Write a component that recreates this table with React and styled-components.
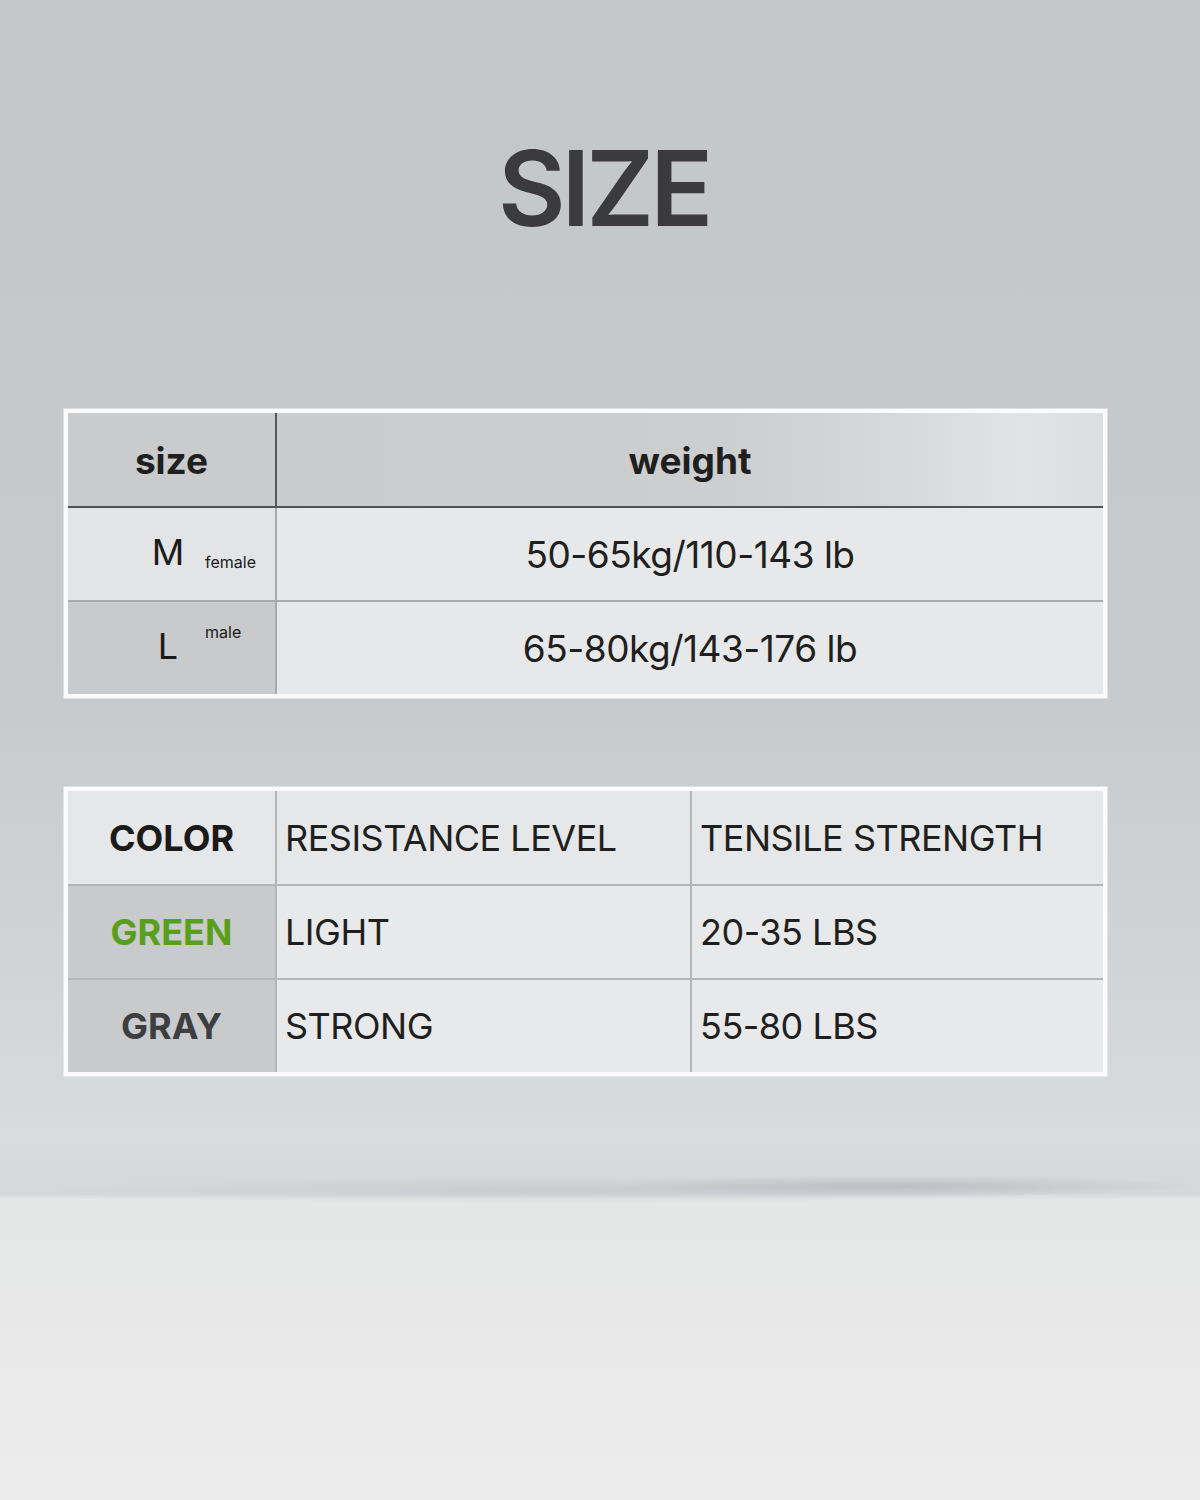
import styled, { createGlobalStyle } from "styled-components";

const GlobalStyle = createGlobalStyle`
    html, body {
        margin: 0;
        padding: 0;
    }
    body {
        font-family: Inter, "Noto Sans", sans-serif;
        color: #1f1f20;
    }
`;

const sizeRows = [
    { size: "M", note: "female", place: "sub", tone: "light", weight: "50-65kg/110-143 lb" },
    { size: "L", note: "male", place: "sup", tone: "dark", weight: "65-80kg/143-176 lb" },
];

const colorRows = [
    { color: "GREEN", ink: "#5a9f1c", level: "LIGHT", strength: "20-35 LBS" },
    { color: "GRAY", ink: "#3d3e40", level: "STRONG", strength: "55-80 LBS" },
];

const App = () => {
    return (
        <Page>
            <GlobalStyle />
            {/* Title */}
            <Title>SIZE</Title>

            {/* Size / weight table */}
            <Table $columns="207px 1fr" $gap="#a7a9ab">
                <Cell $bg="#c9cbcd" $line="#4f5153" $vline="#55575a" $bold $size={37}>size</Cell>
                <Cell $bg="linear-gradient(90deg, #c9cbcd 0%, #cccecf 55%, #d6d8d9 75%, #e2e3e4 90%, #dcdedf 100%)" $line="#4f5153" $bold $size={37}>
                    weight
                </Cell>
                {sizeRows.map((row) => (
                    <Row key={row.size}>
                        <SizeCell $bg={row.tone === "dark" ? "#c8cacc" : "#e3e4e5"}>
                            <SizeLetter>{row.size}</SizeLetter>
                            <SizeNote $place={row.place}>{row.note}</SizeNote>
                        </SizeCell>
                        <Cell $bg="#e7e8e9" $size={37}>{row.weight}</Cell>
                    </Row>
                ))}
            </Table>

            {/* Color / resistance table */}
            <Table $columns="207px 413px 1fr" $gap="#b3b5b7">
                <Cell $bg="#e6e7e8" $bold $ink="#1a1a1a" $size={36}>COLOR</Cell>
                <Cell $bg="#e6e7e8" $align="left" $size={36}>RESISTANCE LEVEL</Cell>
                <Cell $bg="#e6e7e8" $align="left" $size={36}>TENSILE STRENGTH</Cell>
                {colorRows.map((row) => (
                    <Row key={row.color}>
                        <Cell $bg="#c8cacc" $bold $ink={row.ink} $size={36}>{row.color}</Cell>
                        <Cell $bg="#e8e9ea" $align="left" $size={36}>{row.level}</Cell>
                        <Cell $bg="#e8e9ea" $align="left" $size={36}>{row.strength}</Cell>
                    </Row>
                ))}
            </Table>
        </Page>
    );
};

export default App;

// Styled Components
const Page = styled.div`
    width: 1200px;
    height: 1500px;
    box-sizing: border-box;
    padding: 136px 93px 0 64px;
    display: flex;
    flex-direction: column;
    align-items: stretch;
    background:
        radial-gradient(ellipse 300px 11px at 900px 1186px, rgba(160, 166, 172, 0.45), rgba(160, 166, 172, 0) 100%),
        radial-gradient(ellipse 520px 14px at 560px 1190px, rgba(180, 185, 190, 0.35), rgba(180, 185, 190, 0) 100%),
        linear-gradient(180deg, #c3c7ca 0%, #c7cacd 45%, #d2d5d7 66%, #d9dbdc 76%, #d5d7d9 79.6%, #e5e6e6 80%, #e9e9e9 90%, #ececec 100%);
`;

const Title = styled.h1`
    margin: 0 0 169px 36px;
    font-size: 104px;
    line-height: 1;
    font-weight: 600;
    letter-spacing: -4px;
    color: #3b3b3d;
    text-align: center;
`;

const Table = styled.div`
    display: grid;
    grid-template-columns: ${(p) => p.$columns};
    grid-template-rows: 93px 92px 92px;
    gap: 2px;
    border: 4px solid #fbfbfb;
    background: ${(p) => p.$gap};
    box-shadow: 0 0 0 1px rgba(255, 255, 255, 0.4);
    margin-bottom: 89px;
`;

const Row = styled.div`
    display: contents;
`;

const Cell = styled.div`
    display: flex;
    align-items: center;
    justify-content: ${(p) => (p.$align === "left" ? "flex-start" : "center")};
    padding-left: ${(p) => (p.$align === "left" ? "8px" : "0")};
    background: ${(p) => p.$bg};
    box-shadow: ${(p) =>
        p.$line
            ? `inset 0 -2px 0 ${p.$line}${p.$vline ? `, 2px 0 0 ${p.$vline}` : ""}`
            : "none"};
    margin-bottom: ${(p) => (p.$line ? "-2px" : "0")};
    position: relative;
    font-size: ${(p) => p.$size}px;
    font-weight: ${(p) => (p.$bold ? 700 : 400)};
    color: ${(p) => p.$ink || "#1f1f20"};
    letter-spacing: ${(p) => (p.$bold ? "0" : "-0.5px")};
    white-space: nowrap;
`;

const SizeCell = styled.div`
    display: flex;
    align-items: baseline;
    padding-left: 74px;
    padding-top: 22px;
    background: ${(p) => p.$bg};
    color: #1a1a1a;
`;

const SizeLetter = styled.span`
    width: 52px;
    text-align: center;
    font-size: 36px;
    font-weight: 400;
`;

const SizeNote = styled.span`
    margin-left: 11px;
    font-size: 16px;
    position: relative;
    top: ${(p) => (p.$place === "sup" ? "-21px" : "3px")};
`;
